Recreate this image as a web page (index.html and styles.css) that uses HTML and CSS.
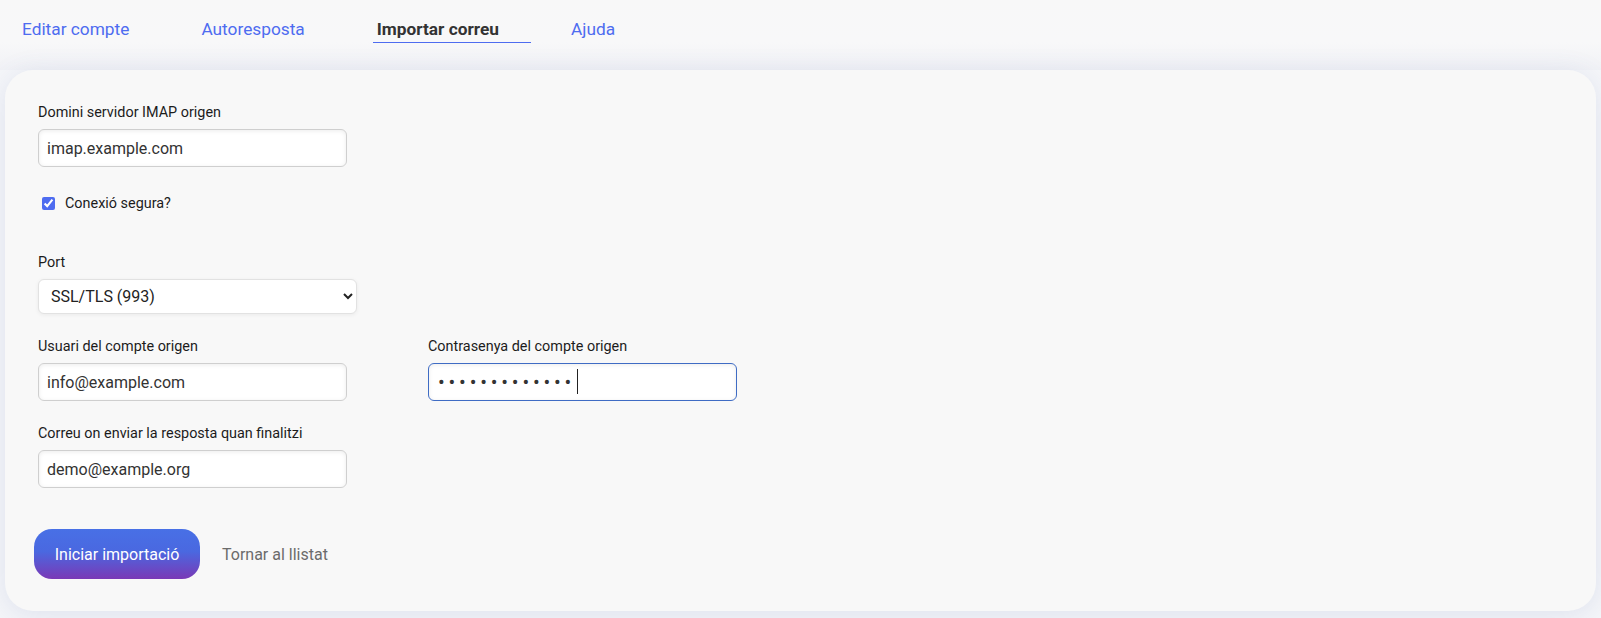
FILE: index.html
```html
<!DOCTYPE html>
<html lang="ca">
<head>
    <meta charset="utf-8">
    <meta name="viewport" content="width=device-width, initial-scale=1">
    <title>Importar correu</title>
    <link rel="stylesheet" href="styles.css">
</head>
<body>
    <!-- pestanyes del compte -->
    <nav class="tabs">
        <a class="tab" href="#">Editar compte</a>
        <a class="tab" href="#">Autoresposta</a>
        <a class="tab active" href="#">Importar correu</a>
        <a class="tab" href="#">Ajuda</a>
    </nav>

    <main class="page">
        <form class="card">
            <div class="field">
                <label for="imapHost">Domini servidor IMAP origen</label>
                <input id="imapHost" class="input" type="text" value="imap.example.com">
            </div>

            <div class="check-row">
                <input id="imapSsl" type="checkbox" checked>
                <label for="imapSsl">Conexió segura?</label>
            </div>

            <div class="field">
                <label for="imapPort">Port</label>
                <select id="imapPort" class="select">
                    <option selected>SSL/TLS (993)</option>
                    <option>STARTTLS (143)</option>
                </select>
            </div>

            <div class="field-row">
                <div class="field">
                    <label for="imapUser">Usuari del compte origen</label>
                    <input id="imapUser" class="input" type="text" value="info@example.com">
                </div>
                <div class="field">
                    <label for="imapPass">Contrasenya del compte origen</label>
                    <div class="pass-wrap">
                        <input id="imapPass" class="input is-focus" type="password" value="secretpass123">
                        <span class="caret"></span>
                    </div>
                </div>
            </div>

            <div class="field">
                <label for="notifyMail">Correu on enviar la resposta quan finalitzi</label>
                <input id="notifyMail" class="input" type="text" value="demo@example.org">
            </div>

            <div class="actions">
                <button type="button" class="btn-primary">Iniciar importació</button>
                <a class="link-back" href="#">Tornar al llistat</a>
            </div>
        </form>
    </main>
</body>
</html>
```

FILE: styles.css
```css
html, body {
    margin: 0;
    padding: 0;
}
body {
    font-family: Roboto, "Liberation Sans", Arial, sans-serif;
    background: #f5f6f9;
    color: #1c1c1c;
    height: 618px;
    overflow: hidden;
}

/* pestanyes */
.tabs {
    display: flex;
    gap: 36px;
    padding: 14px 0 0 18px;
    height: 56px;
    background: linear-gradient(#f8f8f8, #f8f8f9 60%, #f1f2f6);
}
.tab {
    display: block;
    font-size: 17.3px;
    line-height: 20px;
    padding: 5px 32px 3px 4px;
    color: #4e6cf0;
    text-decoration: none;
    border-bottom: 1px solid transparent;
    height: 20px;
}
.tab.active {
    color: #333;
    font-weight: bold;
    border-bottom-color: #4e6cf0;
}

/* targeta */
.page {
    padding: 0 5px 7px;
}
.card {
    background: #f8f8f8;
    border-radius: 28px;
    padding: 35px 33px 31px;
    height: 475px;
    box-shadow: 0 4px 28px rgba(70, 90, 160, 0.13);
}

.field {
    margin-bottom: 25px;
}
.field label {
    display: block;
    font-size: 14.4px;
    line-height: 16px;
    margin-bottom: 8px;
}
.input {
    box-sizing: border-box;
    width: 309px;
    height: 38px;
    padding: 0 8px;
    font-family: inherit;
    font-size: 16px;
    color: #333;
    background: #fff;
    border: 1px solid #cfcfcf;
    border-radius: 6px;
    box-shadow: inset 0 1px 4px rgba(0, 0, 0, 0.08);
    outline: none;
}
.input.is-focus {
    border-color: #3f6cc4;
}
.input[type="password"] {
    padding-left: 9px;
    font-size: 20px;
    letter-spacing: 3.8px;
}
.pass-wrap {
    position: relative;
    width: 309px;
    height: 38px;
}
.caret {
    position: absolute;
    left: 149px;
    top: 6px;
    width: 1px;
    height: 25px;
    background: #222;
}
.select {
    box-sizing: border-box;
    width: 319px;
    height: 35px;
    padding: 0 8px;
    font-family: inherit;
    font-size: 16px;
    color: #222;
    background: #fff;
    border: 1px solid #e2e2e2;
    border-radius: 6px;
    box-shadow: 0 1px 4px rgba(0, 0, 0, 0.06);
}

.check-row {
    display: flex;
    align-items: center;
    height: 22px;
    margin: 0 0 41px;
}
.check-row input {
    margin: 0 10px 0 4px;
    width: 13px;
    height: 13px;
    accent-color: #4e6cf0;
}
.check-row label {
    font-size: 14.4px;
}

.field-row {
    display: grid;
    grid-template-columns: 350px 350px;
    column-gap: 40px;
}

.actions {
    display: flex;
    align-items: center;
    gap: 22px;
    margin: 41px 0 0 -4px;
}
.btn-primary {
    width: 166px;
    height: 50px;
    border: none;
    border-radius: 18px;
    font-family: inherit;
    font-size: 16px;
    color: #fff;
    background: linear-gradient(180deg, #4870e6 0%, #4a68e0 45%, #7a39b6 100%);
    cursor: pointer;
}
.link-back {
    font-size: 16px;
    color: #6b6b6b;
    text-decoration: none;
}
```
